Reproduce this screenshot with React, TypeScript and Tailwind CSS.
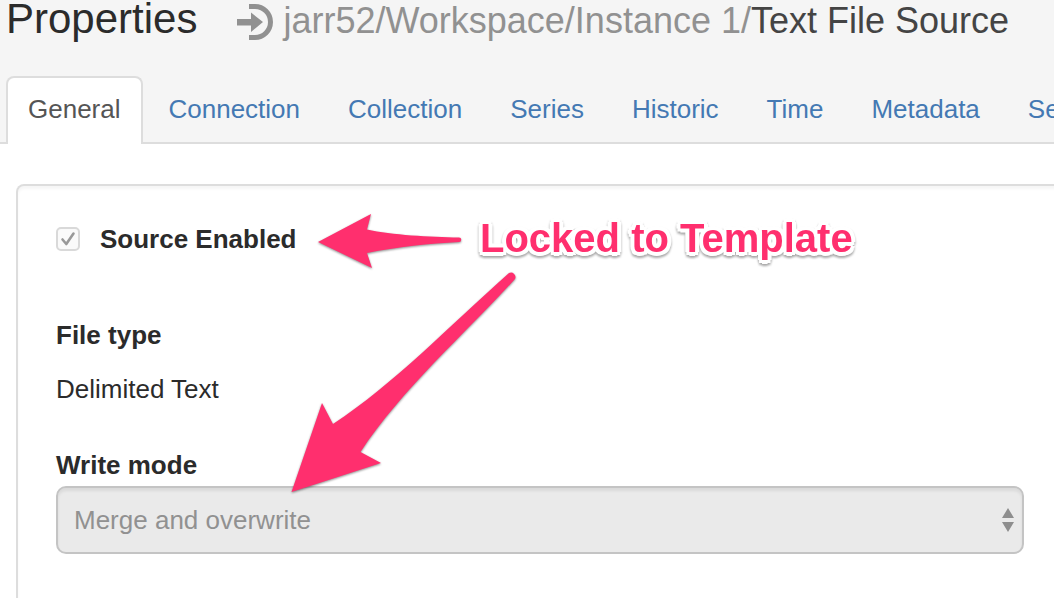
const tabs = [
  'Connection',
  'Collection',
  'Series',
  'Historic',
  'Time',
  'Metadata',
  'Security',
];

function SourceIcon() {
  return (
    <svg className="mt-1 h-9 w-9 shrink-0" viewBox="0 0 36 36" fill="#919191" aria-hidden="true">
      <path d="M0 15h14V8.500L26 18 14 28v-6.500H0z" />
      <path d="M12 0h6a18 18 0 0 1 0 36h-6v-5h6a13 13 0 0 0 0-26h-6z" />
    </svg>
  );
}

function Header() {
  return (
    <header className="border-b-2 border-[#ddd] bg-[#f5f5f5] px-1.5">
      <div className="flex items-start whitespace-nowrap">
        <h1 className="text-[42px] leading-[38px] text-[#2b2b2b]">Properties</h1>
        <div className="ml-10 flex items-start gap-2.5 text-4xl leading-[42px] text-[#919191]">
          <SourceIcon />
          <p>
            jarr52/Workspace/Instance 1/<span className="text-[#444]">Text File Source</span>
          </p>
        </div>
      </div>
      <nav className="-mb-0.5 mt-[34px] flex gap-1 whitespace-nowrap leading-[38px]" aria-label="Properties">
        <a
          href="#general"
          aria-current="page"
          className="rounded-t-lg border-2 border-b-0 border-[#ddd] bg-white px-5 pb-4 pt-3 text-[#555]"
        >
          General
        </a>
        {tabs.map((tab) => (
          <a
            key={tab}
            href={`#${tab.toLowerCase()}`}
            className="border-2 border-b-0 border-transparent px-5 pb-4 pt-3 text-[#4479b3]"
          >
            {tab}
          </a>
        ))}
      </nav>
    </header>
  );
}

function Annotations() {
  return (
    <>
      <svg
        className="pointer-events-none absolute left-0 top-0 h-[598px] w-[600px] drop-shadow-[0_1px_1px_rgba(0,0,0,0.45)]"
        viewBox="0 0 600 598"
        fill="#ff2f6e"
        aria-hidden="true"
      >
        <path d="M318 242L371 214L367 229.500C392 235 430 237 459 237.500A2.200 2.200 0 0 1 459 242C430 243.500 397 247 367 253L372 268Z" />
        <path d="M291.500 492L322 403L333 424C395 383 446 329 509 273A4.500 4.500 0 0 1 515 279C465 334 403 388 360.500 452L381 463Z" />
      </svg>
      <p className="pointer-events-none absolute left-[480px] top-[214px] whitespace-nowrap text-[40px] font-bold leading-[48px] text-[#ff2f6e] drop-shadow-[0_2px_1px_rgba(0,0,0,0.35)] [text-shadow:4px_0_white,-4px_0_white,0_4px_white,0_-4px_white,3px_3px_white,-3px_3px_white,3px_-3px_white,-3px_-3px_white,2px_0_white,-2px_0_white,0_2px_white,0_-2px_white]">
        Locked to Template
      </p>
    </>
  );
}

export default function App() {
  return (
    <div className="relative flex h-screen flex-col overflow-hidden bg-white font-['Liberation_Sans',Arial,sans-serif] text-[26px] leading-10 text-[#2b2b2b]">
      <Header />
      <main className="-mr-2.5 ml-4 mt-10 flex-1 rounded-t-lg border-2 border-b-0 border-[#ddd] px-[38px] pt-[33px] shadow-[inset_0_3px_3px_rgba(0,0,0,0.04)]">
        <div className="flex items-center gap-5">
          <span className="relative flex">
            <input
              id="enabled"
              type="checkbox"
              defaultChecked
              disabled
              className="h-6 w-6 appearance-none rounded-[5px] border-2 border-[#d9d9d9] bg-[#fafafa]"
            />
            <svg
              className="pointer-events-none absolute inset-0 h-6 w-6"
              viewBox="0 0 24 24"
              fill="none"
              stroke="#999"
              strokeWidth="2.600"
              strokeLinecap="round"
              strokeLinejoin="round"
              aria-hidden="true"
            >
              <path d="M6.500 12.500L10.300 17L17.500 6.500" />
            </svg>
          </span>
          <label htmlFor="enabled" className="font-bold">
            Source Enabled
          </label>
        </div>
        <h2 className="mt-14 font-bold">File type</h2>
        <p className="mt-3.5">Delimited Text</p>
        <label htmlFor="mode" className="mt-9 block font-bold">
          Write mode
        </label>
        <div className="relative mt-px">
          <select
            id="mode"
            disabled
            className="block h-[68px] w-full appearance-none rounded-[10px] border-2 border-[#c4c4c4] bg-[#eaeaea] pl-4 pr-10 text-[#919191] opacity-100 shadow-[inset_0_3px_3px_rgba(0,0,0,0.07)]"
          >
            <option>Merge and overwrite</option>
          </select>
          <svg
            className="pointer-events-none absolute right-2.5 top-[22px] h-6 w-3"
            viewBox="0 0 12 24"
            fill="#8e8e8e"
            aria-hidden="true"
          >
            <path d="M6 0l6 10H0zM0 14h12L6 24z" />
          </svg>
        </div>
      </main>
      <Annotations />
    </div>
  );
}
